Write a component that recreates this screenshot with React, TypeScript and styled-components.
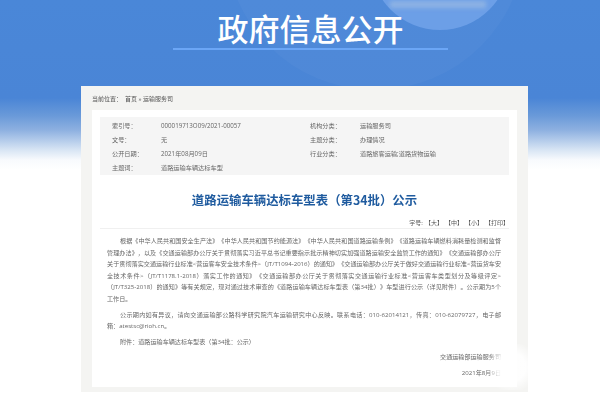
import React from "react";
import styled, { createGlobalStyle } from "styled-components";

const Global = createGlobalStyle`
  html, body { margin: 0; padding: 0; background: #fff; }
  body { font-family: "Open Sans", "Noto Sans CJK SC", "Liberation Sans", sans-serif; }
`;

const Page = styled.div`
  position: relative;
  width: 600px;
  height: 400px;
  overflow: hidden;
  background: linear-gradient(180deg, #4a87d8 0, #4a85d6 98px, #6a9ad9 116px, #8db0e0 130px, #d8e5f4 150px, #f8fafd 160px, #fff 170px);
`;

const Circle = styled.div`
  position: absolute;
  left: 370px;
  top: -110px;
  width: 140px;
  height: 140px;
  border-radius: 50%;
  background: #6c9fe7;
  overflow: hidden;
  &::after {
    content: "";
    position: absolute;
    left: 20px;
    right: 24px;
    bottom: 22px;
    height: 7px;
    background: rgba(170, 195, 225, 0.55);
    filter: blur(2px);
  }
`;

const Ring = styled.div`
  position: absolute;
  left: 225px;
  top: -210px;
  width: 300px;
  height: 300px;
  border-radius: 50%;
  background: rgba(255, 255, 255, 0.03);
`;

const Header = styled.header`
  position: relative;
  height: 86px;
  padding-left: 21px;
  display: flex;
  flex-direction: column;
  align-items: center;
`;

const Heading = styled.h1`
  margin: 9px 0 0;
  font-family: "Noto Sans CJK SC", sans-serif;
  font-size: 31px;
  line-height: 38px;
  font-weight: 500;
  color: #fff;
`;

const Rule = styled.div`
  width: 275px;
  height: 2px;
  margin-top: 1px;
  background: #6ba6f6;
`;

const Card = styled.main`
  position: relative;
  width: 447px;
  height: 306px;
  margin-left: 81px;
  box-sizing: border-box;
  background: #f4f4f2;
  padding: 0 11px;
  display: flex;
  flex-direction: column;
  filter: blur(0.3px);
`;

const Crumb = styled.div`
  height: 24px;
  display: flex;
  align-items: center;
  font-size: 6px;
  color: #555;
  gap: 3px;
`;

const Panel = styled.div`
  height: 277px;
  background: #fff;
  padding: 7px 8px 0;
  display: flex;
  flex-direction: column;
  box-sizing: border-box;
`;

const Meta = styled.div`
  height: 58px;
  background: #f5f5f5;
  padding: 1px 0 0 12px;
  box-sizing: border-box;
  display: grid;
  grid-template-columns: 49px 149px 50px 1fr;
  grid-auto-rows: 14.2px;
  align-items: center;
  font-size: 6.2px;
  color: #666;
`;

const Title = styled.h2`
  margin: 15px 0 0;
  font-family: "Noto Sans CJK SC", sans-serif;
  text-align: center;
  font-size: 12.4px;
  line-height: 20px;
  font-weight: 700;
  color: #1f5b9f;
`;

const Tools = styled.div`
  margin-top: 5px;
  height: 14px;
  box-sizing: border-box;
  padding-top: 2px;
  display: flex;
  justify-content: flex-end;
  align-items: center;
  gap: 2px;
  font-size: 6px;
  color: #555;
  border-bottom: 1px solid #f0f0f0;
`;

const Body = styled.div`
  padding: 6px 0 0 7px;
  width: 394px;
  font-size: 6.1px;
  line-height: 11.6px;
  color: #666;
  text-spacing-trim: space-all;
`;

const Para = styled.p`
  margin: 0 0 4px;
  text-indent: 13px;
  text-align: justify;
`;

const NoBreak = styled.span`
  white-space: nowrap;
`;

const Sign = styled.div<{ $top?: number }>`
  text-align: right;
  margin-top: ${(p) => p.$top ?? 0}px;
  line-height: 11px;
`;

const Watermark = styled.div`
  position: absolute;
  left: 484px;
  top: 344px;
  width: 46px;
  height: 46px;
  background: radial-gradient(circle at 60% 50%, rgba(255, 255, 255, 0.9) 40%, rgba(255, 255, 255, 0) 72%);
`;

const meta = [
  ["索引号：", "000019713O09/2021-00057", "机构分类：", "运输服务司"],
  ["文号：", "无", "主题分类：", "办理情况"],
  ["公开日期：", "2021年08月09日", "行业分类：", "道路旅客运输;道路货物运输"],
  ["主题词：", "道路运输车辆达标车型", "", ""],
];

export default function App() {
  return (
    <Page>
      <Global />
      <Ring />
      <Circle />
      <Header>
        <Heading>政府信息公开</Heading>
        <Rule />
      </Header>
      <Card>
        <Crumb>
          <span>当前位置：</span>
          <span>首页 » 运输服务司</span>
        </Crumb>
        <Panel>
          <Meta>
            {meta.flat().map((t, i) => (
              <span key={i}>{t}</span>
            ))}
          </Meta>
          <Title>道路运输车辆达标车型表（第34批）公示</Title>
          <Tools>
            <span>字号:</span>
            <span>【大】</span>
            <span>【中】</span>
            <span>【小】</span>
            <span>【打印】</span>
          </Tools>
          <Body>
            <Para>
              根据《中华人民共和国安全生产法》《中华人民共和国节约能源法》《中华人民共和国道路运输条例》《道路运输车辆燃料消耗量检测和监督管理办法》，以及《交通运输部办公厅关于贯彻落实习近平总书记重要指示批示精神切实加强道路运输安全监管工作的通知》《交通运输部办公厅关于贯彻落实交通运输行业标准&lt;营运客车安全技术条件&gt;（JT/T1094-2016）的通知》《交通运输部办公厅关于做好交通运输行业标准&lt;营运货车安全技术条件&gt;（JT/T1178.1-2018）落实工作的通知》《交通运输部办公厅关于贯彻落实交通运输行业标准&lt;营运客车类型划分及等级评定&gt;（JT/T325-2018）的通知》等有关规定，现对通过技术审查的《道路运输车辆达标车型表（第34批）》车型进行公示（详见附件）。公示期为5个工作日。
            </Para>
            <Para>
              公示期内如有异议，请向交通运输部公路科学研究院汽车运输研究中心反映。联系电话：010-62014121，传真：010-62079727，电子邮<NoBreak>箱：atestsc@rioh.cn。</NoBreak>
            </Para>
            <Para>附件：道路运输车辆达标车型表（第34批：公示）</Para>
            <Sign $top={3}>交通运输部运输服务司</Sign>
            <Sign $top={5}>2021年8月9日</Sign>
          </Body>
        </Panel>
      </Card>
      <Watermark />
    </Page>
  );
}
